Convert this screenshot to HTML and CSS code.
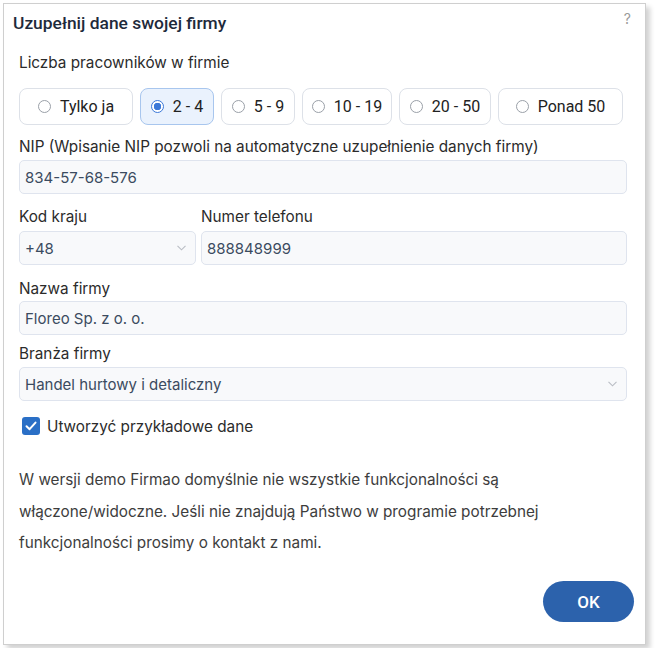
FILE: index.html
```html
<!DOCTYPE html>
<html lang="pl">
<head>
	<meta charset="UTF-8">
	<title>Uzupełnij dane swojej firmy</title>
	<link rel="stylesheet" href="styles.css">
</head>
<body>

	<div class="dialog">
		<div class="dialog_head">
			<h1 class="title">Uzupełnij dane swojej firmy</h1>
			<span class="help">?</span>
		</div>

		<div class="field employees">
			<label class="label">Liczba pracowników w firmie</label>
			<div class="choices">
				<div class="choice"><span class="radio"></span>Tylko ja</div>
				<div class="choice selected"><span class="radio"></span>2 - 4</div>
				<div class="choice"><span class="radio"></span>5 - 9</div>
				<div class="choice"><span class="radio"></span>10 - 19</div>
				<div class="choice"><span class="radio"></span>20 - 50</div>
				<div class="choice"><span class="radio"></span>Ponad 50</div>
			</div>
		</div>

		<div class="field nip">
			<label class="label">NIP (Wpisanie NIP pozwoli na automatyczne uzupełnienie danych firmy)</label>
			<div class="input">834-57-68-576</div>
		</div>

		<div class="row">
			<div class="field code">
				<label class="label">Kod kraju</label>
				<div class="input select">+48
					<svg class="caret" width="9" height="6" viewBox="0 0 9 6"><path d="M0.5 0.8 L4.5 4.8 L8.5 0.8" fill="none" stroke="#b9bdc4" stroke-width="1.1"/></svg>
				</div>
			</div>
			<div class="field phone">
				<label class="label">Numer telefonu</label>
				<div class="input">888848999</div>
			</div>
		</div>

		<div class="field company">
			<label class="label">Nazwa firmy</label>
			<div class="input">Floreo Sp. z o. o.</div>
		</div>

		<div class="field branch">
			<label class="label">Branża firmy</label>
			<div class="input select">Handel hurtowy i detaliczny
				<svg class="caret" width="9" height="6" viewBox="0 0 9 6"><path d="M0.5 0.8 L4.5 4.8 L8.5 0.8" fill="none" stroke="#b9bdc4" stroke-width="1.1"/></svg>
			</div>
		</div>

		<div class="check">
			<span class="box">
				<svg width="12" height="10" viewBox="0 0 12 10"><path d="M1.5 5.2 L4.6 8.2 L10.5 1.6" fill="none" stroke="#fff" stroke-width="2" stroke-linecap="round" stroke-linejoin="round"/></svg>
			</span>
			Utworzyć przykładowe dane
		</div>

		<p class="note">W wersji demo Firmao domyślnie nie wszystkie funkcjonalności są włączone/widoczne. Jeśli nie znajdują Państwo w programie potrzebnej funkcjonalności prosimy o kontakt z nami.</p>

		<div class="actions">
			<button class="ok">OK</button>
		</div>
	</div>

</body>
</html>
```

FILE: styles.css
```css
body {
	margin: 0;
	background: #fff;
	font-family: Inter, "Noto Sans", sans-serif;
	color: #333;
}

.dialog {
	margin: 3px;
	width: 643px;
	height: 642px;
	box-sizing: border-box;
	border: 1px solid #cfcfcf;
	box-shadow: 4px 4px 5px rgba(0, 0, 0, .18);
	padding: 0 18px 0 15px;
	display: flex;
	flex-direction: column;
}

.dialog_head {
	display: flex;
	justify-content: space-between;
	align-items: center;
	height: 38px;
	margin-left: -6px;
}

.title {
	margin: 0;
	font-family: Roboto, sans-serif;
	font-size: 17.4px;
	font-weight: 500;
	color: #1e2a3b;
}

.help {
	color: #9a9a9a;
	font-size: 14px;
	margin-top: -10px;
	margin-right: -4px;
}

.field {
	display: flex;
	flex-direction: column;
}

.label {
	font-size: 15.3px;
	line-height: 20px;
	color: #2b2b2b;
	margin-bottom: 3px;
}

.employees {
	margin-top: 11px;
}

.employees .label {
	margin-bottom: 15px;
}

.choices {
	display: grid;
	grid-template-columns: 114px 74px 74px 90px 92px 125px;
	gap: 7px;
}

.choice {
	height: 37px;
	box-sizing: border-box;
	border: 1px solid #dde1e8;
	border-radius: 8px;
	display: flex;
	align-items: center;
	justify-content: center;
	gap: 9px;
	font-family: Roboto, sans-serif;
	font-size: 16px;
	color: #222;
	white-space: nowrap;
}

.choice.selected {
	background: #eaf2fd;
	border-color: #a8c6ee;
}

.radio {
	width: 13px;
	height: 13px;
	box-sizing: border-box;
	border: 1px solid #9aa0a8;
	border-radius: 50%;
	background: #fff;
}

.selected .radio {
	border-color: #3b78d8;
	background: radial-gradient(circle, #3b78d8 0 3.5px, #fff 4px);
}

.input {
	height: 34px;
	box-sizing: border-box;
	border: 1px solid #dfe4ee;
	border-radius: 5px;
	background: #f8f9fb;
	display: flex;
	align-items: center;
	justify-content: space-between;
	padding: 0 9px 0 5px;
	font-size: 15px;
	color: #3b4b60;
}

.nip {
	margin-top: 12px;
}

.row {
	display: flex;
	gap: 5px;
	margin-top: 13px;
}

.row .input {
	margin-top: 1px;
}

.code {
	width: 177px;
}

.phone {
	flex: 1;
}

.company {
	margin-top: 14px;
}

.company .label {
	margin-bottom: 2px;
}

.branch {
	margin-top: 9px;
}

.check {
	display: flex;
	align-items: center;
	gap: 7px;
	height: 20px;
	font-size: 15.3px;
	color: #2b2b2b;
	margin: 15px 0 0 3px;
}

.box {
	width: 18px;
	height: 18px;
	border-radius: 3px;
	background: #2a6fc6;
	display: flex;
	align-items: center;
	justify-content: center;
}

.note {
	margin: 28px 0 0;
	font-size: 15.3px;
	line-height: 31.5px;
	color: #3d3d3d;
}

.actions {
	margin-top: auto;
	display: flex;
	justify-content: flex-end;
	padding-bottom: 22px;
	margin-right: -7px;
}

.ok {
	width: 91px;
	height: 41px;
	border: none;
	border-radius: 21px;
	background: #2c62ac;
	color: #fff;
	font-family: Roboto, sans-serif;
	font-size: 17px;
	font-weight: 500;
}
```
